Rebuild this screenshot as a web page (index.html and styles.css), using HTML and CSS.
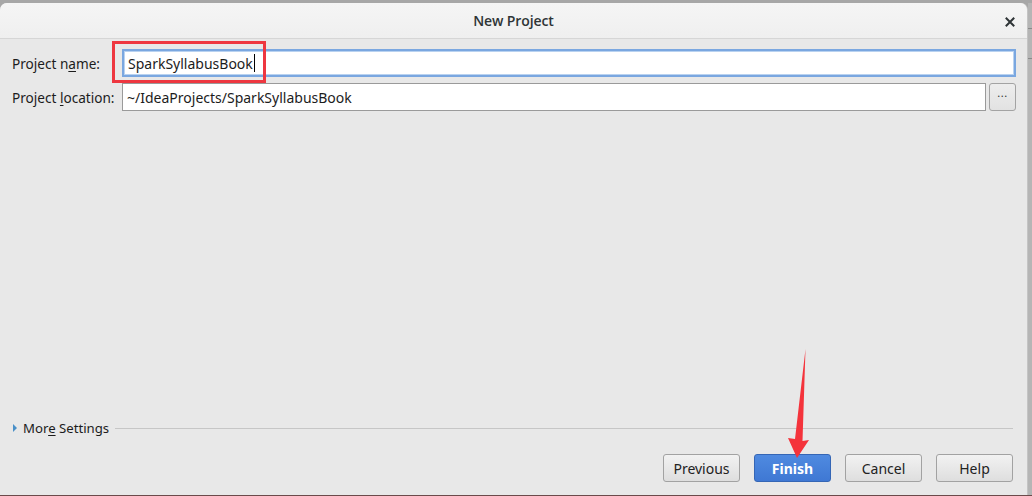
FILE: index.html
```html
<!DOCTYPE html>
<html>
<head>
<meta charset="utf-8">
<link rel="stylesheet" href="styles.css">
</head>
<body>
<div class="screen">
  <div class="dialog">
    <div class="titlebar">
      <span class="title">New Project</span>
      <svg class="close" width="10" height="10" viewBox="0 0 10 10">
        <path d="M1.5 1.5 L8.5 8.5 M8.5 1.5 L1.5 8.5" stroke="#2e3436" stroke-width="2" stroke-linecap="square"/>
      </svg>
    </div>
    <div class="content">
      <div class="form">
        <label class="label">Project n<u>a</u>me:</label>
        <div class="input focused">SparkSyllabusBook<span class="caret"></span></div>
        <label class="label">Project <u>l</u>ocation:</label>
        <div class="loc-row">
          <div class="input">~/IdeaProjects/SparkSyllabusBook</div>
          <div class="browse">...</div>
        </div>
      </div>
      <div class="spacer"></div>
      <div class="more">
        <span class="tri"></span>
        <span class="more-text">Mor<u>e</u> Settings</span>
        <span class="rule"></span>
      </div>
      <div class="buttons">
        <div class="btn">Previous</div>
        <div class="btn primary">Finish</div>
        <div class="btn">Cancel</div>
        <div class="btn">Help</div>
      </div>
    </div>
    <div class="annot"></div>
    <svg class="arrow" width="40" height="120" viewBox="0 0 40 120">
      <polygon points="26.5,0 23.5,92 30,91 18,109 9,89 16,90" fill="#f4333b"/>
    </svg>
  </div>
  <div class="side">
    <div class="side-line l1"></div>
    <div class="side-line l2"></div>
  </div>
</div>
</body>
</html>
```
FILE: styles.css
```css
* { box-sizing: border-box; }
html, body { margin: 0; padding: 0; }
body {
  width: 1032px;
  height: 496px;
  overflow: hidden;
  background: #a7a7a7;
  font-family: "Noto Sans", "DejaVu Sans", sans-serif;
  font-size: 14px;
  color: #1c1c1c;
}
.screen {
  display: flex;
  height: 496px;
  padding-top: 3px;
  border-bottom: 1px solid #6b4a4a;
}
.dialog {
  position: relative;
  width: 1028px;
  height: 492px;
  background: #e8e8e8;
  border-radius: 7px 7px 0 0;
  display: flex;
  flex-direction: column;
  border-right: 1px solid #c4c4c4;
}
.titlebar {
  height: 36px;
  flex: none;
  background: linear-gradient(#f5f5f5, #efefef);
  border-radius: 7px 7px 0 0;
  border-bottom: 1px solid #d6d6d6;
  display: flex;
  align-items: center;
  justify-content: center;
  position: relative;
}
.title {
  font-family: "Open Sans", "Noto Sans", sans-serif;
  font-weight: 600;
  font-size: 14px;
  color: #2e3436;
  letter-spacing: -0.1px;
}
.close {
  position: absolute;
  right: 12px;
  top: 14px;
}
.content {
  flex: 1;
  display: flex;
  flex-direction: column;
  padding: 10px 11px 13px 12px;
}
.form {
  display: grid;
  grid-template-columns: 110px 1fr;
  row-gap: 6px;
  align-items: center;
}
.label { white-space: nowrap; font-size: 13.6px; }
.label u { text-decoration-thickness: 1px; text-underline-offset: 2px; }
.input {
  height: 28px;
  background: #fff;
  border: 1px solid #9a9a9a;
  padding: 0 4px;
  display: flex;
  align-items: center;
  white-space: nowrap;
}
.input.focused {
  border: 2px solid #7aa7e0;
  box-shadow: inset 0 0 0 1px #b9d2f0;
  padding-left: 4px;
}
.caret {
  display: inline-block;
  width: 1px;
  height: 18px;
  background: #000;
  margin-left: 1px;
}
.loc-row {
  display: flex;
  gap: 3px;
}
.loc-row .input { flex: 1; }
.browse {
  width: 27px;
  height: 28px;
  border: 1px solid #a3a3a3;
  border-radius: 3px;
  background: linear-gradient(#ededed, #e2e2e2);
  display: flex;
  align-items: flex-start;
  justify-content: center;
  font-size: 11px;
  line-height: 18px;
  color: #333;
  letter-spacing: 0.5px;
}
.spacer { flex: 1; }
.more {
  display: flex;
  align-items: center;
  height: 20px;
  padding-left: 1px;
  margin-right: 3px;
}
.tri {
  width: 0; height: 0;
  border-top: 4px solid transparent;
  border-bottom: 4px solid transparent;
  border-left: 4px solid #4a90c8;
  margin-right: 6px;
}
.more-text { white-space: nowrap; font-size: 13.2px; }
.more-text u { text-underline-offset: 2px; }
.rule {
  flex: 1;
  height: 1px;
  background: #c6c6c6;
  margin-left: 6px;
}
.buttons {
  display: flex;
  justify-content: flex-end;
  gap: 14px;
  margin-top: 16px;
  padding-right: 3px;
}
.btn {
  width: 77px;
  height: 28px;
  border: 1px solid #a2a2a2;
  border-radius: 3px;
  background: linear-gradient(#f2f2f2, #dedede);
  display: flex;
  align-items: center;
  justify-content: center;
  color: #222;
}
.btn.primary {
  background: linear-gradient(#4f8ae0, #3f78d3);
  border-color: #3566b5;
  color: #fff;
  font-weight: bold;
}
.annot {
  position: absolute;
  left: 112px;
  top: 38px;
  width: 154px;
  height: 42px;
  border: 3px solid #ee3740;
}
.arrow {
  position: absolute;
  left: 779px;
  top: 346px;
}
.side {
  flex: 1;
  background: #b5b5b5;
  position: relative;
}
.side-line {
  position: absolute;
  left: 0; right: 0;
  height: 1px;
  background: #8a8a8a;
}
.l1 { top: 25px; }
.l2 { top: 55px; }
```
